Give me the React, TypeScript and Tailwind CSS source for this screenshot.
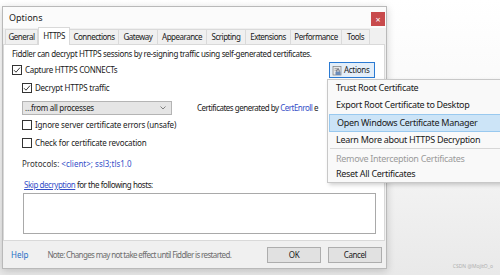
import React from "react";

const F = { fontFamily: '"Noto Sans", "Open Sans", sans-serif' } as const;

function Check({ checked }: { checked?: boolean }) {
  return (
    <div className="w-[10px] h-[10px] border border-[#333333] bg-white flex items-center justify-center shrink-0">
      {checked && (
        <svg width="8" height="8" viewBox="0 0 8 8">
          <path d="M1 4.2 L3 6.2 L7 1.6" fill="none" stroke="#222" strokeWidth="0.9" />
        </svg>
      )}
    </div>
  );
}

const tabs: { label: string; w: string; sel?: boolean }[] = [
  { label: "General", w: "w-[33px]" },
  { label: "HTTPS", w: "w-[32px]", sel: true },
  { label: "Connections", w: "w-[49px]" },
  { label: "Gateway", w: "w-[39px]" },
  { label: "Appearance", w: "w-[49px]" },
  { label: "Scripting", w: "w-[39px]" },
  { label: "Extensions", w: "w-[45px]" },
  { label: "Performance", w: "w-[51px]" },
  { label: "Tools", w: "w-[28px]" },
];

export default function App() {
  return (
    <div
      className="relative w-[500px] h-[275px] overflow-hidden bg-linear-to-b from-white via-[#f7f7f7] to-[#e9e9e9] text-[8px] tracking-[-0.4px] text-[#1a1a1a]"
      style={F}
    >
      {/* Window */}
      <div className="absolute left-[2px] top-[6px] w-[385px] h-[263px] border border-[#b9b9b9] bg-[#f0f0f0] shadow-[0_2px_8px_rgba(0,0,0,0.18)] flex flex-col">
        {/* Title bar */}
        <div className="h-[21px] bg-[#fbfbfb] flex items-center justify-between">
          <span className="pl-[6px] text-[9px] tracking-[0px] text-[#222]">Options</span>
          <div className="self-start mt-[5px] mr-[1px] w-[14px] h-[14px] bg-[#c84a4c] flex items-center justify-center text-white text-[9px] leading-none tracking-normal">
            ×
          </div>
        </div>
        {/* Tabs */}
        <div className="h-[16px] flex items-end pl-[2px] bg-[#f0f0f0] tracking-[-0.5px]">
          {tabs.map((t, i) => (
            <div
              key={t.label}
              className={
                t.sel
                  ? `${t.w} h-[18px] -mb-[1px] relative z-10 bg-white border border-b-0 border-[#d9d9d9] flex items-center justify-center pb-[2px]`
                  : `${t.w} h-[15px] bg-[#f0f0f0] border-t border-r border-[#dadada] ${i === 0 ? "border-l" : ""} flex items-center justify-center`
              }
            >
              {t.label}
            </div>
          ))}
        </div>
        {/* Panel */}
        <div className="h-[197px] w-[382px] bg-white border border-[#d9d9d9] flex flex-col">
          <div className="mt-[3px] h-[12px] flex items-center pl-[8px] tracking-[-0.35px]">
            Fiddler can decrypt HTTPS sessions by re-signing traffic using self-generated certificates.
          </div>
          <div className="mt-[2px] h-[16px] flex items-center justify-between pl-[8px] pr-[9px]">
            <div className="flex items-center gap-[3px]">
              <Check checked />
              <span className="tracking-[-0.3px]">Capture HTTPS CONNECTs</span>
            </div>
            <div className="w-[46px] h-[16px] border border-[#2a7ad3] bg-[#e3eef9] flex items-center pl-[2px] gap-[1px]">
              <svg width="11" height="11" viewBox="0 0 11 11">
                <rect x="1" y="1.5" width="8" height="8.5" fill="#e8e8e8" stroke="#7a7a7a" strokeWidth="0.7" />
                <rect x="2.5" y="3" width="4.5" height="0.8" fill="#9a9a9a" />
                <rect x="2.5" y="4.8" width="4.5" height="0.8" fill="#9a9a9a" />
                <rect x="3.5" y="6.5" width="5" height="3.6" rx="0.5" fill="#6b8bb7" />
                <path d="M4.6 6.6 V5.6 A1.4 1.4 0 0 1 7.4 5.6 V6.6" fill="none" stroke="#556" strokeWidth="0.7" />
              </svg>
              <span className="tracking-[-0.3px]">Actions</span>
            </div>
          </div>
          <div className="mt-[4px] h-[12px] flex items-center pl-[18px] gap-[3px]">
            <Check checked />
            <span className="tracking-[-0.25px]">Decrypt HTTPS traffic</span>
          </div>
          <div className="mt-[7px] h-[14px] flex items-center pl-[18px]">
            <div className="w-[150px] h-[14px] bg-[#e5e5e5] border border-[#b4b4b4] flex items-center justify-between pl-[2px] pr-[5px]">
              <span className="tracking-[-0.3px]">…from all processes</span>
              <svg width="6" height="4" viewBox="0 0 6 4">
                <path d="M0.5 0.5 L3 3 L5.5 0.5" fill="none" stroke="#555" strokeWidth="0.7" />
              </svg>
            </div>
            <span className="ml-[25px] whitespace-nowrap tracking-[-0.5px]">
              Certificates generated by <span className="text-[#3550c8]">CertEnroll</span> e
            </span>
          </div>
          <div className="mt-[4px] h-[12px] flex items-center pl-[18px] gap-[3px]">
            <Check />
            <span className="tracking-[-0.15px]">Ignore server certificate errors (unsafe)</span>
          </div>
          <div className="mt-[6px] h-[12px] flex items-center pl-[18px] gap-[3px]">
            <Check />
            <span className="tracking-[-0.15px]">Check for certificate revocation</span>
          </div>
          <div className="mt-[9px] h-[12px] flex items-center pl-[18px] text-[#333] tracking-[0px]">
            Protocols:&nbsp;<span className="text-[#3550c8]">&lt;client&gt;; ssl3;tls1.0</span>
          </div>
          <div className="mt-[9px] h-[12px] flex items-center pl-[20px] tracking-[-0.45px]">
            <span className="text-[#3550c8] underline">Skip decryption</span>
            <span>&nbsp;for the following hosts:</span>
          </div>
          <div className="mt-[2px] ml-[19px] w-[353px] h-[41px] border border-[#a9a9a9] bg-white" />
        </div>
        {/* Footer */}
        <div className="h-[27px] flex items-center pl-[8px] pr-[4px]">
          <span className="text-[#1f6fc5] tracking-[0px]">Help</span>
          <span className="ml-[19px] text-[#6d6d6d] whitespace-nowrap tracking-[-0.65px] text-[8px]">
            Note: Changes may not take effect until Fiddler is restarted.
          </span>
          <div className="ml-auto flex gap-[7px]">
            <div className="w-[54px] h-[16px] bg-[#e1e1e1] border border-[#adadad] flex items-center justify-center">OK</div>
            <div className="w-[54px] h-[16px] bg-[#e1e1e1] border border-[#adadad] flex items-center justify-center">Cancel</div>
          </div>
        </div>
      </div>

      {/* Context menu */}
      <div className="absolute left-[327px] top-[79px] w-[180px] h-[104px] bg-[#f9f9f9] border border-[#c8c8c8] shadow-[2px_2px_4px_rgba(0,0,0,0.18)] text-[9px] tracking-[-0.3px] text-[#1a1a1a] flex flex-col">
        <div className="h-[16px] flex items-center pl-[8px]">Trust Root Certificate</div>
        <div className="h-[18px] flex items-center pl-[8px]">Export Root Certificate to Desktop</div>
        <div className="h-[18px] ml-[1px] flex items-center pl-[7px] bg-[#cce4f7] border border-[#99c9ef]">
          Open Windows Certificate Manager
        </div>
        <div className="h-[16px] flex items-center pl-[8px]">Learn More about HTTPS Decryption</div>
        <div className="h-[3px] flex items-center pl-[2px]">
          <div className="w-full h-px bg-[#d7d7d7]" />
        </div>
        <div className="h-[16px] flex items-center pl-[8px] text-[#9b9b9b]">Remove Interception Certificates</div>
        <div className="h-[16px] flex items-center pl-[8px]">Reset All Certificates</div>
      </div>

      {/* Watermark */}
      <div className="absolute right-[7px] bottom-[5px] text-[5px] tracking-normal text-[#b0b0b0]">CSDN @MojitO_o</div>
    </div>
  );
}
